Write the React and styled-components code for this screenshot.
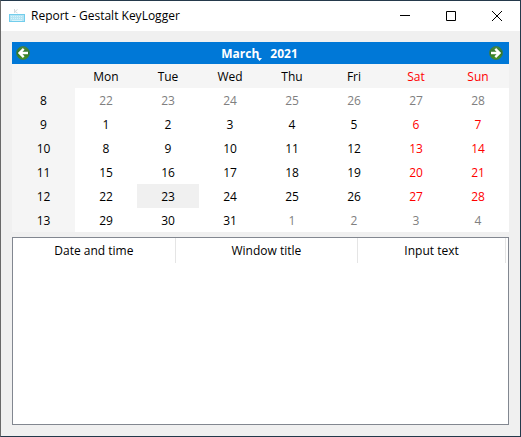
import React from "react";
import styled, { createGlobalStyle } from "styled-components";

const GlobalStyle = createGlobalStyle`
  *, *::before, *::after { box-sizing: border-box; }
  body { margin: 0; }
  button, table { font: inherit; color: inherit; }
`;

const Window = styled.div`
  display: flex;
  flex-direction: column;
  min-height: 100vh;
  border: 1px solid #24394b;
  border-left-color: #696969;
  background: #f0f0f0;
  color: #000;
  font: 12px/16px "Open Sans", "Noto Sans", sans-serif;
`;

const TitleBar = styled.header`
  display: flex;
  align-items: center;
  height: 30px;
  padding-left: 8px;
  background: #fff;
`;

const Title = styled.h1`
  flex: 1;
  margin: 0 0 0 5px;
  font-size: 12px;
  line-height: 16px;
  font-weight: 400;
  white-space: nowrap;
`;

const PlainButton = styled.button`
  display: flex;
  align-items: center;
  justify-content: center;
  padding: 0;
  border: 0;
  background: none;
`;

const CaptionButton = styled(PlainButton)`
  width: 46px;
  height: 30px;
`;

const Content = styled.main`
  display: flex;
  flex: 1;
  flex-direction: column;
  gap: 5px;
  padding: 11px;
`;

const CalendarBar = styled.div`
  display: flex;
  align-items: center;
  justify-content: space-between;
  height: 22px;
  padding: 0 6px 0 4px;
  background: #0078d7;
  color: #fff;
  font-weight: 700;
`;

const MonthYear = styled.div`
  display: flex;
  gap: 11px;
  padding-top: 1px;
`;

const MonthButton = styled(PlainButton)`
  position: relative;
  font-weight: 700;
`;

const MenuArrow = styled.svg`
  position: absolute;
  right: -3px;
  bottom: 1px;
`;

const Days = styled.table`
  width: 100%;
  table-layout: fixed;
  border-collapse: collapse;
  background: #fff;
  text-align: center;
`;

const WeekColumn = styled.col`
  width: 63px;
`;

const DayRow = styled.tr`
  height: 24px;
`;

const HeadCell = styled.th`
  padding: 2px 0 0;
  background: #f5f5f5;
  color: ${(p) => (p.$weekend ? "#f00" : "#000")};
  font-weight: 400;
`;

const dayColor = (p) => (p.$outside ? "#808080" : p.$weekend ? "#f00" : "#000");

const DayCell = styled.td`
  padding: 2px 0 0;
  background: ${(p) => (p.$selected ? "#f0f0f0" : "#fff")};
  color: ${dayColor};
`;

const ReportPane = styled.section`
  flex: 1;
  border: 1px solid #828790;
  background: #fff;
`;

const ReportTable = styled.table`
  width: calc(100% - 2px);
  table-layout: fixed;
  border-collapse: separate;
  border-spacing: 0;
`;

const ReportHead = styled.th`
  width: ${(p) => p.$width};
  height: 25px;
  padding: 1px 0 0;
  border-right: 1px solid #e5e5e5;
  font-weight: 400;
  white-space: nowrap;
`;

function AppIcon() {
  return (
    <svg width="17" height="16" viewBox="0 0 17 16" aria-hidden="true">
      <path d="M5.5 1v4M8.5 1.5L6 3.5L8.5 5" stroke="#d2dadd" fill="none" />
      <rect x="0.5" y="6.5" width="15" height="7" fill="#b5e4f3" stroke="#72cdec" />
      <path d="M2 8.5h12M2 10.5h12" stroke="#d8f3fa" strokeDasharray="1 1" />
      <path d="M3 12.5h10" stroke="#d8f3fa" />
    </svg>
  );
}

function ArrowIcon({ forward }) {
  return (
    <svg width="14" height="14" viewBox="0 0 14 14" aria-hidden="true">
      <defs>
        <linearGradient id={forward ? "discNext" : "discPrev"} x1="0" y1="0" x2="0" y2="1">
          <stop offset="0" stopColor="#4f8f45" />
          <stop offset="0.5" stopColor="#2e7424" />
          <stop offset="1" stopColor="#4f9a24" />
        </linearGradient>
      </defs>
      <circle cx="7" cy="7" r="6.5" fill={`url(#${forward ? "discNext" : "discPrev"})`} stroke="#3b7a4b" strokeWidth="0.8" />
      <path
        d={forward ? "M2 7h9M6.3 2.8L10.5 7L6.3 11.2" : "M12 7h-9M7.7 2.8L3.5 7L7.7 11.2"}
        fill="none"
        stroke="#fff"
        strokeWidth="2.4"
      />
    </svg>
  );
}

function CaptionIcon({ d }) {
  return (
    <svg width="10" height="10" viewBox="0 0 10 10" aria-hidden="true">
      <path d={d} fill="none" stroke="#000" />
    </svg>
  );
}

const captionButtons = [
  ["Minimize", "M0 4.5h10"],
  ["Maximize", "M0.5 0.5h9v9h-9z"],
  ["Close", "M0 0L10 10M10 0L0 10"],
];

const dayNames = ["Mon", "Tue", "Wed", "Thu", "Fri", "Sat", "Sun"];

const weeks = [8, 9, 10, 11, 12, 13].map((number, row) => ({
  number,
  days: dayNames.map((_, col) => new Date(2021, 1, 22 + row * 7 + col)),
}));

const reportColumns = [
  ["Date and time", "33%"],
  ["Window title", "auto"],
  ["Input text", "30%"],
];

export default function App() {
  return (
    <>
      <GlobalStyle />
      <Window>
        <TitleBar>
          <AppIcon />
          <Title>Report - Gestalt KeyLogger</Title>
          {captionButtons.map(([label, d]) => (
            <CaptionButton key={label} type="button" aria-label={label}>
              <CaptionIcon d={d} />
            </CaptionButton>
          ))}
        </TitleBar>
        <Content>
          <section aria-label="Calendar">
            <CalendarBar>
              <PlainButton type="button" aria-label="Previous month">
                <ArrowIcon />
              </PlainButton>
              <MonthYear>
                <MonthButton type="button" aria-haspopup="menu">
                  March
                  <MenuArrow width="5" height="3" viewBox="0 0 5 3" aria-hidden="true">
                    <path d="M0 0h5L2.5 3z" fill="#fff" />
                  </MenuArrow>
                </MonthButton>
                <MonthButton type="button">2021</MonthButton>
              </MonthYear>
              <PlainButton type="button" aria-label="Next month">
                <ArrowIcon forward />
              </PlainButton>
            </CalendarBar>
            <Days>
              <colgroup>
                <WeekColumn />
                <col span={7} />
              </colgroup>
              <thead>
                <DayRow>
                  <HeadCell as="td" />
                  {dayNames.map((name, i) => (
                    <HeadCell key={name} scope="col" $weekend={i > 4}>
                      {name}
                    </HeadCell>
                  ))}
                </DayRow>
              </thead>
              <tbody>
                {weeks.map(({ number, days }) => (
                  <DayRow key={number}>
                    <HeadCell scope="row">{number}</HeadCell>
                    {days.map((day, i) => (
                      <DayCell
                        key={i}
                        $weekend={i > 4}
                        $outside={day.getMonth() !== 2}
                        $selected={day.getMonth() === 2 && day.getDate() === 23}
                      >
                        {day.getDate()}
                      </DayCell>
                    ))}
                  </DayRow>
                ))}
              </tbody>
            </Days>
          </section>
          <ReportPane aria-label="Report">
            <ReportTable>
              <thead>
                <tr>
                  {reportColumns.map(([name, width]) => (
                    <ReportHead key={name} scope="col" $width={width}>
                      {name}
                    </ReportHead>
                  ))}
                </tr>
              </thead>
            </ReportTable>
          </ReportPane>
        </Content>
      </Window>
    </>
  );
}
